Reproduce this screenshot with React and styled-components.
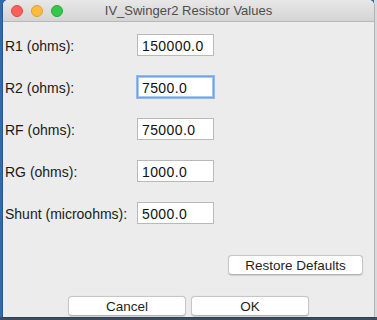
import React from "react";
import styled, { createGlobalStyle } from "styled-components";

const fields = [
  { label: "R1 (ohms):", value: "150000.0" },
  { label: "R2 (ohms):", value: "7500.0", focused: true },
  { label: "RF (ohms):", value: "75000.0" },
  { label: "RG (ohms):", value: "1000.0" },
  { label: "Shunt (microohms):", value: "5000.0" },
];

function App() {
  return (
    <>
      <Global />
      <Desktop>
        <Window>
          <TitleBar>
            <Lights>
              <Light color="#fc605b" edge="#de4a44" />
              <Light color="#fdbc40" edge="#dea032" />
              <Light color="#34c84a" edge="#27a93a" />
            </Lights>
            <Title>IV_Swinger2 Resistor Values</Title>
            <span />
          </TitleBar>
          <Content>
            <Form>
              {fields.map(({ label, value, focused }) => (
                <React.Fragment key={label}>
                  <Label>{label}</Label>
                  <Entry defaultValue={value} $focused={focused} />
                </React.Fragment>
              ))}
            </Form>
            <RestoreRow>
              <Button $width="135px">Restore Defaults</Button>
            </RestoreRow>
            <ButtonRow>
              <Button $width="118px">Cancel</Button>
              <Button $width="118px">OK</Button>
            </ButtonRow>
          </Content>
        </Window>
      </Desktop>
    </>
  );
}

export default App;

const Global = createGlobalStyle`
  body {
    margin: 0;
    font-family: "Liberation Sans", Arial, sans-serif;
  }
`;

const Desktop = styled.div`
  width: 377px;
  height: 320px;
  overflow: hidden;
  display: flex;
  padding-left: 3px;
  box-sizing: border-box;
  background:
    linear-gradient(to top, #3c4d61 0, #3c4d61 3px, transparent 3px),
    linear-gradient(to left, #d9dadc 0, #d9dadc 3px, transparent 3px),
    #2f6cae;
`;

const Window = styled.div`
  width: 371px;
  height: 317px;
  background: #ececec;
  border-radius: 5px 5px 0 0;
  box-shadow: 0 0 0 0.5px rgba(0, 0, 0, 0.35);
  display: flex;
  flex-direction: column;
  overflow: hidden;
`;

const TitleBar = styled.div`
  height: 22px;
  flex: none;
  box-sizing: border-box;
  display: grid;
  grid-template-columns: 1fr auto 1fr;
  align-items: center;
  background: linear-gradient(#e8e8e8, #d4d4d4);
  border-bottom: 1px solid #b8b8b8;
`;

const Lights = styled.div`
  display: flex;
  gap: 8px;
  padding-left: 8px;
`;

const Light = styled.span`
  width: 12px;
  height: 12px;
  border-radius: 50%;
  box-sizing: border-box;
  background: ${(p) => p.color};
  border: 0.5px solid ${(p) => p.edge};
`;

const Title = styled.div`
  font-size: 13px;
  color: #4d4d4d;
`;

const Content = styled.div`
  display: flex;
  flex-direction: column;
  padding: 12px 11px 0 2px;
`;

const Form = styled.div`
  display: grid;
  grid-template-columns: 132px 77px;
  grid-auto-rows: 22px;
  row-gap: 20px;
  align-items: center;
`;

const Label = styled.div`
  font-size: 14px;
  color: #1a1a1a;
  padding-top: 2px;
  white-space: nowrap;
`;

const Entry = styled.input`
  width: 77px;
  height: 22px;
  box-sizing: border-box;
  padding: 1px 0 0 4px;
  font-family: "Liberation Sans", Arial, sans-serif;
  font-size: 14px;
  letter-spacing: 0.4px;
  color: #111;
  background: #fff;
  outline: none;
  border: 1px solid ${(p) => (p.$focused ? "#6ea2e8" : "#b9b9b9")};
  box-shadow: ${(p) =>
    p.$focused ? "inset 0 0 0 1px #a9caf3, 0 0 0 1px #94bbef" : "none"};
`;

const RestoreRow = styled.div`
  display: flex;
  justify-content: flex-end;
  margin-top: 31px;
`;

const ButtonRow = styled.div`
  display: flex;
  justify-content: center;
  gap: 5px;
  margin-top: 21px;
  padding-left: 9px;
`;

const Button = styled.button`
  width: ${(p) => p.$width};
  height: 20px;
  padding: 0;
  font-family: "Liberation Sans", Arial, sans-serif;
  font-size: 13.5px;
  color: #1e1e1e;
  background: #fff;
  border: 1px solid #c6c6c6;
  border-bottom-color: #b3b3b3;
  border-radius: 4px;
  box-shadow: 0 0.5px 1px rgba(0, 0, 0, 0.12);
`;
